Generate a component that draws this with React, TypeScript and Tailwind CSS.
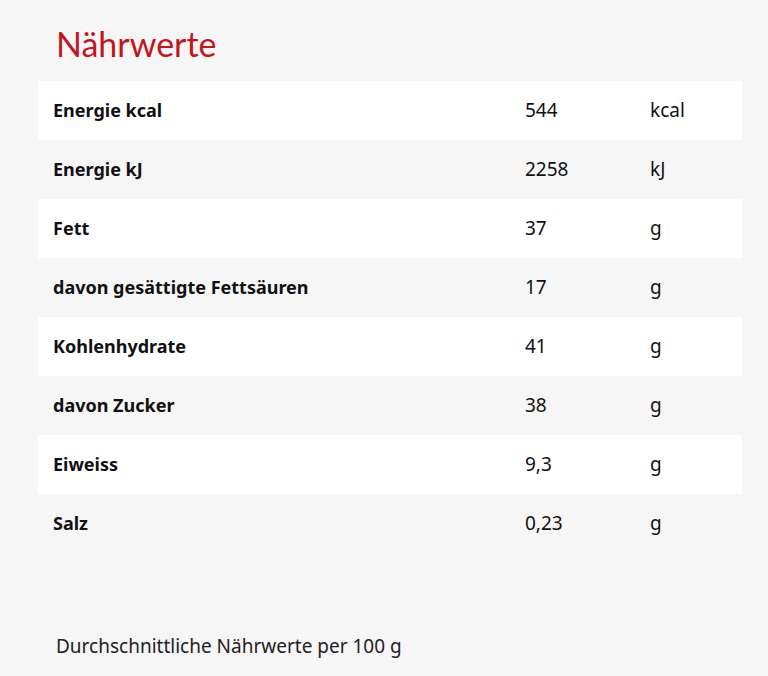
const rows = [
  ['Energie kcal', '544', 'kcal'],
  ['Energie kJ', '2258', 'kJ'],
  ['Fett', '37', 'g'],
  ['davon gesättigte Fettsäuren', '17', 'g'],
  ['Kohlenhydrate', '41', 'g'],
  ['davon Zucker', '38', 'g'],
  ['Eiweiss', '9,3', 'g'],
  ['Salz', '0,23', 'g'],
];

export default function App() {
  return (
    <div className="min-h-[676px] w-[768px] bg-[#f6f6f6] pt-[22px] font-['Noto_Sans',sans-serif] text-[#111]">
      <h2 className="pl-[56px] font-['Lato',sans-serif] text-[34px] leading-[44px] text-[#c4141c]">
        Nährwerte
      </h2>
      <div className="ml-[38px] mr-[26px] mt-[15px]">
        {rows.map(([name, value, unit], i) => (
          <div
            key={name}
            className={`flex h-[59px] items-center text-[18px] ${i % 2 === 0 ? 'bg-white' : 'bg-[#f6f6f6]'}`}
          >
            <div className="w-[487px] pl-[15px] font-bold">{name}</div>
            <div className="w-[125px] text-[19px]">{value}</div>
            <div className="text-[19px]">{unit}</div>
          </div>
        ))}
      </div>
      <p className="mt-[79px] pl-[56px] text-[19px] text-[#222]">
        Durchschnittliche Nährwerte per 100 g
      </p>
    </div>
  );
}
